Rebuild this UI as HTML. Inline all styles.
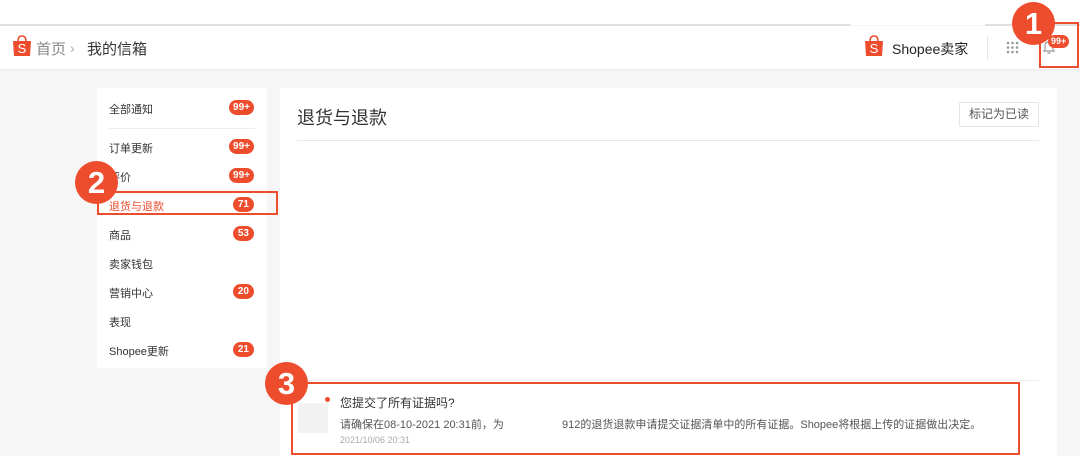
<!DOCTYPE html><html><head><meta charset="utf-8"><style>
*{margin:0;padding:0;box-sizing:border-box}
body{width:1080px;height:456px;overflow:hidden;background:#f6f6f6;font-family:"Liberation Sans","Noto Sans CJK SC",sans-serif;position:relative;color:#333}
.a{position:absolute}
.badge{position:absolute;right:13px;background:#ee4d2d;color:#fff;font-size:10px;font-weight:bold;border-radius:8px;height:15px;line-height:15px;padding:0 4px}
.it{position:absolute;left:12px;font-size:11px;color:#333}
.circ{position:absolute;width:43px;height:43px;border-radius:50%;background:#ee4d2d;color:#fff;font-size:31px;font-weight:bold;text-align:center;line-height:43px}
.box{position:absolute;border:2px solid #ee4d2d}
</style></head><body>
<div class="a" style="left:0;top:0;width:1080px;height:25px;background:#fff"></div>
<div class="a" style="left:0;top:24px;width:850px;height:2px;background:#e3dedc"></div>
<div class="a" style="left:985px;top:24px;width:95px;height:2px;background:#e3dedc"></div>
<div class="a" style="left:0;top:26px;width:1080px;height:43px;background:#fff;box-shadow:0 1px 2px rgba(0,0,0,.06)"></div>
<svg class="a" style="left:12px;top:35px" width="20" height="22" viewBox="0 0 20 22"><path d="M6 6 Q6 1 10 1 Q14 1 14 6" fill="none" stroke="#ee4d2d" stroke-width="1.5"/><path d="M1 6 H19 L18 21 H2 Z" fill="#ee4d2d"/><text x="10" y="18" font-size="13" fill="#fff" text-anchor="middle" font-family="Liberation Sans">S</text></svg>
<div class="a" style="left:36px;top:38px;font-size:15px;color:#888">首页</div>
<div class="a" style="left:70px;top:40px;font-size:14px;color:#aaa">›</div>
<div class="a" style="left:87px;top:38px;font-size:15px;color:#333">我的信箱</div>
<svg class="a" style="left:864px;top:35px" width="20" height="22" viewBox="0 0 20 22"><path d="M6 6 Q6 1 10 1 Q14 1 14 6" fill="none" stroke="#ee4d2d" stroke-width="1.5"/><path d="M1 6 H19 L18 21 H2 Z" fill="#ee4d2d"/><text x="10" y="18" font-size="13" fill="#fff" text-anchor="middle" font-family="Liberation Sans">S</text></svg>
<div class="a" style="left:892px;top:39px;font-size:14px;color:#222">Shopee卖家</div>
<div class="a" style="left:987px;top:36px;width:1px;height:24px;background:#e5e5e5"></div>
<svg class="a" style="left:1006px;top:41px" width="13" height="13"><g fill="#999"><circle cx="2" cy="2" r="1.3"/><circle cx="6.5" cy="2" r="1.3"/><circle cx="11" cy="2" r="1.3"/><circle cx="2" cy="6.5" r="1.3"/><circle cx="6.5" cy="6.5" r="1.3"/><circle cx="11" cy="6.5" r="1.3"/><circle cx="2" cy="11" r="1.3"/><circle cx="6.5" cy="11" r="1.3"/><circle cx="11" cy="11" r="1.3"/></g></svg>
<svg class="a" style="left:1042px;top:40px" width="14" height="16"><path d="M3 11 V6 Q3 2 7 2 Q11 2 11 6 V11 H13 H1Z M5.5 13 H8.5" fill="none" stroke="#999" stroke-width="1.2"/></svg>
<div class="a" style="left:1048px;top:35px;background:#ee4d2d;color:#fff;font-size:9px;font-weight:bold;border-radius:7px;padding:0 3px;height:13px;line-height:13px">99+</div>
<div class="box" style="left:1039px;top:22px;width:40px;height:46px"></div>
<div class="circ" style="left:1012px;top:2px">1</div>

<div class="a" style="left:97px;top:88px;width:170px;height:280px;background:#fff">
<div class="it" style="top:13px">全部通知</div><div class="badge" style="top:12px">99+</div>
<div class="a" style="left:12px;top:40px;width:146px;height:1px;background:#eee"></div>
<div class="it" style="top:52px">订单更新</div><div class="badge" style="top:51px">99+</div>
<div class="it" style="top:81px">评价</div><div class="badge" style="top:80px">99+</div>
<div class="it" style="top:110px;color:#ee4d2d">退货与退款</div><div class="badge" style="top:109px;padding:0 5px">71</div>
<div class="it" style="top:139px">商品</div><div class="badge" style="top:138px;padding:0 5px">53</div>
<div class="it" style="top:168px">卖家钱包</div>
<div class="it" style="top:197px">营销中心</div><div class="badge" style="top:196px;padding:0 5px">20</div>
<div class="it" style="top:226px">表现</div>
<div class="it" style="top:255px">Shopee更新</div><div class="badge" style="top:254px;padding:0 5px">21</div>
</div>
<div class="box" style="left:97px;top:191px;width:181px;height:24px"></div>
<div class="circ" style="left:75px;top:161px">2</div>

<div class="a" style="left:280px;top:88px;width:777px;height:368px;background:#fff">
<div class="a" style="left:17px;top:16px;font-size:18px;color:#333">退货与退款</div>
<div class="a" style="left:679px;top:14px;width:80px;height:25px;border:1px solid #e5e5e5;border-radius:2px;font-size:12px;color:#555;text-align:center;line-height:23px">标记为已读</div>
<div class="a" style="left:17px;top:52px;width:742px;height:1px;background:#e8e8e8"></div>
<div class="a" style="left:17px;top:292px;width:742px;height:1px;background:#eee"></div>
<div class="a" style="left:18px;top:315px;width:30px;height:30px;background:#f2f2f2"></div>
<div class="a" style="left:45px;top:309px;width:5px;height:5px;border-radius:50%;background:#ee4d2d"></div>
<div class="a" style="left:60px;top:306px;font-size:12px;color:#333">您提交了所有证据吗?</div>
<div class="a" style="left:60px;top:328px;font-size:11px;color:#555">请确保在08-10-2021 20:31前，为</div>
<div class="a" style="left:282px;top:328px;font-size:11px;color:#555">912的退货退款申请提交证据清单中的所有证据。Shopee将根据上传的证据做出决定。</div>
<div class="a" style="left:60px;top:347px;font-size:9px;color:#aaa">2021/10/06 20:31</div>
</div>
<div class="box" style="left:291px;top:382px;width:729px;height:73px"></div>
<div class="circ" style="left:265px;top:362px">3</div>
</body></html>
